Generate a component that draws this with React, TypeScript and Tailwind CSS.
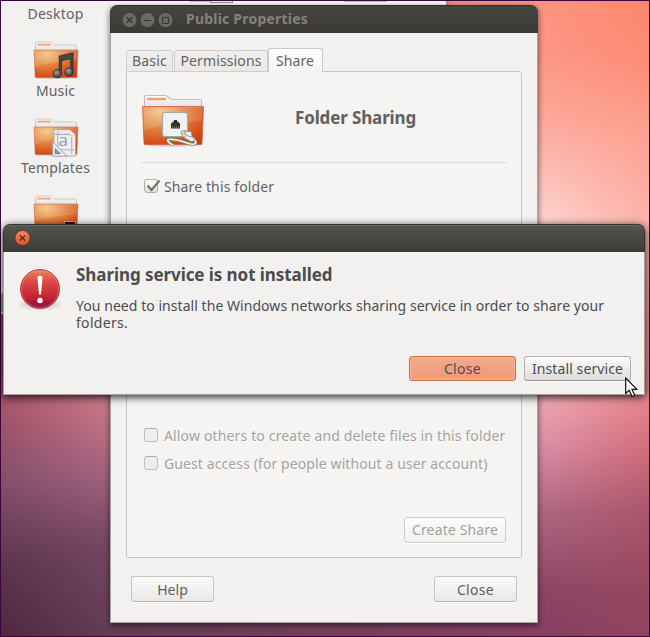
import type { ReactNode } from "react";

function FolderBase({ id }: { id: string }) {
  return (
    <>
      <defs>
        <radialGradient id={id} cx="0.28" cy="0.15" r="0.95">
          <stop offset="0" stopColor="#f2c47e" />
          <stop offset="0.4" stopColor="#e38a45" />
          <stop offset="0.8" stopColor="#d9531f" />
          <stop offset="1" stopColor="#cf3d12" />
        </radialGradient>
        <linearGradient id={`${id}p`} x1="0" y1="0" x2="0" y2="1">
          <stop offset="0" stopColor="#fdfdfd" />
          <stop offset="1" stopColor="#dcdcdc" />
        </linearGradient>
      </defs>
      <ellipse cx="32" cy="50.5" rx="30" ry="2.2" fill="#000" opacity="0.16" />
      <path d="M3.500 16V3Q3.500 1.500 5 1.500H24Q26 1.500 27 3L30 5.500H59Q60.500 5.500 60.500 7V16Z" fill={`url(#${id}p)`} stroke="#bdbdbb" strokeWidth="1.1" />
      <rect x="6" y="3.800" width="19" height="2.400" rx="0.8" fill="#f0a070" />
      <path d="M1.500 12.500H62.500L61 49Q61 50.500 59.500 50.500H4.500Q3 50.500 3 49Z" fill={`url(#${id})`} stroke="#d0623a" strokeWidth="0.8" />
      <path d="M2.300 13.400H61.700L60.500 27Q28 28 3 36Z" fill="#fff" opacity="0.13" />
      <path d="M2.300 13.400H61.700" stroke="#f0a070" strokeWidth="0.8" opacity="0.7" />
    </>
  );
}

function Folder({ id, children }: { id: string; children?: ReactNode }) {
  return (
    <div className="relative h-[40px] w-[48px] pt-px pl-px">
      <svg viewBox="0 0 64 54" className="h-[39px] w-[46px]" preserveAspectRatio="none">
        <FolderBase id={id} />
      </svg>
      {children}
    </div>
  );
}

function MusicIcon() {
  return (
    <Folder id="fm">
      <svg viewBox="0 0 24 28" className="absolute top-[12px] left-[20px] h-[27px] w-[23px]">
        <defs>
          <radialGradient id="note" cx="0.4" cy="0.35" r="0.7">
            <stop offset="0" stopColor="#a0a0a0" />
            <stop offset="1" stopColor="#303030" />
          </radialGradient>
        </defs>
        <path d="M7.500 4L22 0.700V20.500H19.500V7L10 9V22H7.500Z" fill="#484846" stroke="#2c2c2a" strokeWidth="0.8" />
        <circle cx="5.500" cy="22.500" r="4.300" fill="url(#note)" stroke="#2c2c2a" strokeWidth="0.8" />
        <circle cx="17.800" cy="20.800" r="4.300" fill="url(#note)" stroke="#2c2c2a" strokeWidth="0.8" />
      </svg>
    </Folder>
  );
}

function TemplatesIcon() {
  return (
    <Folder id="ft">
      <svg viewBox="0 0 26 29" className="absolute top-[12px] left-[20px] h-[28px] w-[25px]">
        <path d="M2 0.700H18.500L24.500 6.500V28H2Z" fill="#eeeef0" stroke="#aaaaae" />
        <path d="M18.500 0.700V6.500H24.500Z" fill="#fff" stroke="#bbb" strokeWidth="0.7" />
        <path d="M2 5.500H18M6 2V22M4 21.500H23M20.500 8V26" stroke="#b0b0bd" strokeWidth="1.1" />
        <path d="M0.700 13V28.300H15.500Z" fill="#e8e8f0" stroke="#a2a2b0" />
        <path d="M3.500 20.500V25.500H8.500Z" fill="#9696a8" stroke="#77778c" />
      </svg>
      <span className="absolute top-[12px] left-[27px] font-['Open_Sans','Noto_Sans',sans-serif] text-[17px] leading-[21px] text-[#9999ab]">a</span>
    </Folder>
  );
}

function SharedFolderIcon() {
  return (
    <svg viewBox="0 0 64 54" className="h-[54px] w-[64px]">
      <FolderBase id="fs" />
      <rect x="21.500" y="18.500" width="25" height="24" rx="2.500" fill="#f1f1ef" stroke="#a9a9a4" strokeWidth="1.200" />
      <path d="M30 34.500V29H31.500V27.500H33V26H36V27.500H37.500V29H39V34.500Z" fill="#303432" />
      <path d="M31 33.200H38" stroke="#a58a20" strokeWidth="1.200" strokeDasharray="1 1" />
      <path d="M52 44.500C56 48 56 51 50 50C42 48 36 45 29 45.300C24 45.500 28 49 32 51" fill="none" stroke="#85857f" strokeWidth="3" />
      <path d="M52 44.500C56 48 56 51 50 50C42 48 36 45 29 45.300C24 45.500 28 49 32 51" fill="none" stroke="#f1f1ef" strokeWidth="1.600" />
      <path d="M40 38L43 36.500L46.500 37.500L50 37L51.500 43L54.500 45L51 48L46 45.500L42 43Z" fill="#eeeeec" stroke="#888883" />
      <path d="M43.500 37L45 41.500L51.500 43M45 41.500L43 43.500M42 39.500L44 40" fill="none" stroke="#999994" />
    </svg>
  );
}

function AlertIcon() {
  return (
    <svg viewBox="0 0 46 46" className="h-[46px] w-[46px]">
      <defs>
        <linearGradient id="al" x1="0" y1="0" x2="0" y2="1">
          <stop offset="0" stopColor="#e98563" />
          <stop offset="0.35" stopColor="#da4545" />
          <stop offset="0.75" stopColor="#c01f2f" />
          <stop offset="1" stopColor="#7c1450" />
        </linearGradient>
        <radialGradient id="als">
          <stop offset="0" stopColor="#000" stopOpacity="0.28" />
          <stop offset="1" stopColor="#000" stopOpacity="0" />
        </radialGradient>
      </defs>
      <ellipse cx="23" cy="37.500" rx="23" ry="6.500" fill="url(#als)" />
      <circle cx="23" cy="22" r="19.500" fill="url(#al)" stroke="#b92a34" strokeWidth="0.9" />
      <circle cx="23" cy="22" r="18.500" fill="none" stroke="#f0a080" strokeWidth="0.8" opacity="0.5" />
      <path d="M20.500 10.500Q20.500 8.800 23 8.800T25.500 10.500L24 27.500H22Z" fill="#fff" />
      <circle cx="23" cy="33.500" r="2.700" fill="#fff" />
    </svg>
  );
}

function CheckBox({ label, checked, className }: { label: string; checked?: boolean; className: string }) {
  return (
    <div className="flex h-[20px] items-center">
      <span
        className={
          checked
            ? "h-[14px] w-[14px] rounded-[3px] border border-[#b0aeaa] bg-linear-to-b from-white to-[#dededc]"
            : "h-[14px] w-[14px] rounded-[3px] border border-[#c2c0bd] border-t-[#b0aeab] bg-[#efeeed]"
        }
      >
        {checked && (
          <svg viewBox="0 0 17 14" className="-mt-px ml-px h-[14px] w-[17px]">
            <path d="M1.500 6.500L5.500 11L13.500 1.500" fill="none" stroke="#74746f" strokeWidth="2.200" />
          </svg>
        )}
      </span>
      <span className={className}>{label}</span>
    </div>
  );
}

const greyButton =
  "flex h-[26px] items-center justify-center rounded-[3px] border border-[#c9c4c0] border-b-[#b9b6b3] bg-linear-to-b from-[#fafafa] to-[#e9e8e7] text-[#5f5f5f] shadow-[0_1px_0_#fbfbfb]";

export default function App() {
  return (
    <div className="relative h-[637px] w-[650px] overflow-hidden bg-[#8a4363] font-['Noto_Sans','Open_Sans',sans-serif] text-[14px] leading-[17px] text-[#4c4c4c]">
      {/* Wallpaper */}
      <div className="absolute inset-0 bg-[linear-gradient(to_bottom,#8a3a50_300px,#a4536a_410px,#84506b_480px,#5e344d_565px,#50283f_637px)]" />
      <div className="absolute inset-0 bg-[linear-gradient(to_bottom,#c98090_300px,#c67788_410px,#a2627e_475px,#744863_545px,#643b55_637px)] [mask-image:linear-gradient(to_right,transparent,black_110px)]" />
      <div className="absolute inset-0 bg-[linear-gradient(to_bottom,#fe9480_0px,#fd9685_50px,#fda99d_120px,#fdd2ce_215px,#f4b5bb_350px,#eea8b2_400px,#dc90aa_445px,#b06883_510px,#8c4665_590px,#864060_637px)] [mask-image:linear-gradient(to_right,transparent_110px,black_540px)]" />
      <div className="absolute inset-0 bg-[linear-gradient(to_bottom,#fc866c_0px,#fd8c76_60px,#fda08f_130px,#fcb0a6_215px,#e98a8c_350px,#e5838a_400px,#d06c79_450px,#ac566b_510px,#964760_590px,#92445f_637px)] [mask-image:linear-gradient(to_right,transparent_538px,black_650px)]" />

      {/* File manager */}
      <div className="absolute top-0 left-0 flex h-[293px] w-[447px] overflow-hidden border-r border-[#a19b96] bg-[#f2f1f0] text-[#626262] shadow-[0_1px_3px_rgba(0,0,0,0.4)]">
        <div className="flex w-[111px] flex-col items-center pt-[5px]">
          <span className="tracking-[0.23px]">Desktop</span>
          <div className="mt-[18px]"><MusicIcon /></div>
          <span className="mt-[2px] tracking-[0.12px]">Music</span>
          <div className="mt-[18px]"><TemplatesIcon /></div>
          <span className="mt-[2px] tracking-[0.17px]">Templates</span>
          <div className="mt-[18px]">
            <Folder id="fv">
              <span className="absolute top-[27px] left-[32px] h-[14px] w-[12px] border border-white/60 bg-[#1c1c1c]" />
            </Folder>
          </div>
        </div>
        <div className="flex grow bg-[#fbfafa]">
          <span className="ml-[78px] h-[2px] w-[21px] rounded-b bg-[#c4c1bf]" />
          <span className="h-[3px] w-[23px] border border-t-0 border-[#96918d] bg-[#efefef]" />
          <span className="ml-[110px] h-[2px] w-[44px] rounded-b bg-[#bcb9b8]" />
        </div>
      </div>
      <div className="absolute top-[292px] left-0 h-[22px] w-[5px] border-y-2 border-[#e8e070] bg-[#7fa8a0]" />
      <div className="absolute inset-0 border border-[#3c0540]" />

      {/* Public Properties window */}
      <div className="absolute top-[5px] left-[110px] flex h-[618px] w-[428px] flex-col rounded-t-[7px] shadow-[0_2px_6px_rgba(0,0,0,0.6)]">
        <div className="flex h-[28px] shrink-0 items-center rounded-t-[7px] border-t border-[#2f2e2a] bg-linear-to-b from-[#45443f] to-[#3b3a36] pl-[12px]">
          <svg viewBox="0 0 52 16" className="h-[16px] w-[52px]">
            <g fill="#6b6963" stroke="#302f2b" strokeWidth="0.6">
              <circle cx="7.500" cy="8" r="7.500" />
              <circle cx="25.500" cy="8" r="7.500" />
              <circle cx="43.500" cy="8" r="7.500" />
            </g>
            <path d="M4.700 5.200L10.300 10.800M10.300 5.200L4.700 10.800" fill="none" stroke="#35342f" strokeWidth="1.300" />
            <path d="M22 8.500H29M40.500 5.500H46.500V11.500H40.500Z" fill="none" stroke="#35342f" strokeWidth="1" />
          </svg>
          <h1 className="ml-[12px] pb-[3px] text-[14px] font-bold tracking-[0.21px] text-[#85827b]">Public Properties</h1>
        </div>
        <div className="flex grow flex-col border border-t-0 border-[#aaa5a1] bg-[#f2f1f0] px-[15px] pt-[15px] text-[#626262]">
          <div className="z-10 flex h-[24px] items-end">
            <span className="flex h-[22px] w-[47px] items-center justify-center rounded-t-[3px] border border-[#d0ceca] bg-linear-to-b from-[#f0efee] to-[#eae9e8] pb-[2px] tracking-[0.2px]">Basic</span>
            <span className="ml-px flex h-[22px] w-[94px] items-center justify-center rounded-t-[3px] border border-[#d0ceca] bg-linear-to-b from-[#f0efee] to-[#eae9e8] pb-[2px] tracking-[0.12px]">Permissions</span>
            <span className="flex h-[24px] w-[55px] items-center justify-center rounded-t-[3px] border border-b-0 border-[#cac8c4] bg-linear-to-b from-white to-[#f5f4f3] pr-px pb-px tracking-[0.08px]">Share</span>
          </div>
          <div className="-mt-px flex h-[487px] flex-col rounded-[3px] rounded-tl-none border border-[#c6c4c1] bg-[#f5f4f3] px-[14px]">
            <div className="mt-[22px] flex h-[69px] items-start border-b border-[#dbd9d6]">
              <SharedFolderIcon />
              <h2 className="mt-[13px] ml-[90px] text-[17px] leading-[22px] font-bold tracking-[-0.14px] text-[#606060]">Folder Sharing</h2>
            </div>
            <div className="mt-[13px] pl-[3px]">
              <CheckBox label="Share this folder" checked className="ml-[6px] tracking-[0.12px]" />
            </div>
            <div className="mt-[229px] flex flex-col gap-[8px] pl-[3px] text-[#a3a19e]">
              <CheckBox label="Allow others to create and delete files in this folder" className="ml-[6px] whitespace-nowrap tracking-[0.15px] [text-shadow:0_1px_0_#fff]" />
              <CheckBox label="Guest access (for people without a user account)" className="ml-[6px] whitespace-nowrap tracking-[0.1px] [text-shadow:0_1px_0_#fff]" />
            </div>
            <div className="mt-[44px] flex justify-end pr-px">
              <span className="flex h-[26px] w-[102px] items-center justify-center rounded-[3px] border border-[#cfcdcb] bg-linear-to-b from-[#fdfdfd] to-[#f1f0ef] pb-[2px] tracking-[0.15px] text-[#a3a19e] shadow-[0_1px_0_#fff]">Create Share</span>
            </div>
          </div>
          <div className="mt-[18px] flex justify-between px-[5px]">
            <button className={`${greyButton} w-[83px]`}>Help</button>
            <button className={`${greyButton} w-[83px] tracking-[0.3px]`}>Close</button>
          </div>
        </div>
      </div>

      {/* Alert dialog */}
      <div className="absolute top-[224px] left-[3px] flex h-[171px] w-[642px] flex-col rounded-t-[7px] shadow-[0_2px_9px_rgba(0,0,0,0.85)]">
        <div className="flex h-[28px] shrink-0 items-center rounded-t-[7px] border border-b-0 border-[#33322e] bg-linear-to-b from-[#55544e] to-[#3c3b37] pb-px pl-[10px] shadow-[inset_0_1px_0_#686660]">
          <svg viewBox="0 0 16 16" className="h-[16px] w-[16px]">
            <defs>
              <linearGradient id="cl" x1="0" y1="0" x2="0" y2="1">
                <stop offset="0" stopColor="#f58a64" />
                <stop offset="1" stopColor="#e0501f" />
              </linearGradient>
            </defs>
            <circle cx="8.500" cy="8" r="7.500" fill="url(#cl)" stroke="#33322e" strokeWidth="0.6" />
            <path d="M5.800 5.300L11.200 10.700M11.200 5.300L5.800 10.700" stroke="#38251c" strokeWidth="1.200" />
          </svg>
        </div>
        <div className="flex grow flex-col border border-t-0 border-[#a5a09c] bg-[#f2f1f0] pr-[13px] pl-[13px]">
          <div className="flex h-[104px]">
            <div className="mt-[15px]"><AlertIcon /></div>
            <div className="ml-[13px] pt-[12px] text-[#4c4c4c]">
              <h2 className="text-[17px] leading-[22px] font-bold tracking-[-0.07px]">Sharing service is not installed</h2>
              <p className="mt-[11px] whitespace-nowrap tracking-[0.05px]">
                You need to install the Windows networks sharing service in order to share your
                <br />
                <span className="tracking-[0.3px]">folders.</span>
              </p>
            </div>
          </div>
          <div className="flex justify-end gap-[8px]">
            <button className="flex h-[25px] w-[107px] items-center justify-center rounded-[3px] border border-[#cd6f4c] bg-linear-to-b from-[#f3aa8b] to-[#ee9877] pb-px tracking-[0.3px] shadow-[inset_0_0_2px_1px_#f6b89e]">Close</button>
            <button className="flex h-[25px] w-[107px] items-center justify-center rounded-[3px] border border-[#b2afac] border-b-[#9d9a98] bg-linear-to-b from-[#fcfcfc] to-[#dddcdb] pb-px tracking-[0.1px] shadow-[0_1px_0_#fbfbfb]">Install service</button>
          </div>
        </div>
      </div>

      {/* Pointer */}
      <svg viewBox="0 0 13 21" className="absolute top-[377px] left-[625px] h-[21px] w-[13px]">
        <path d="M0.700 1V16.500L4.200 13.300L7 19.500L9.700 18.300L7 12.300H11.800Z" fill="#fff" stroke="#111" strokeWidth="1.200" />
      </svg>
    </div>
  );
}
